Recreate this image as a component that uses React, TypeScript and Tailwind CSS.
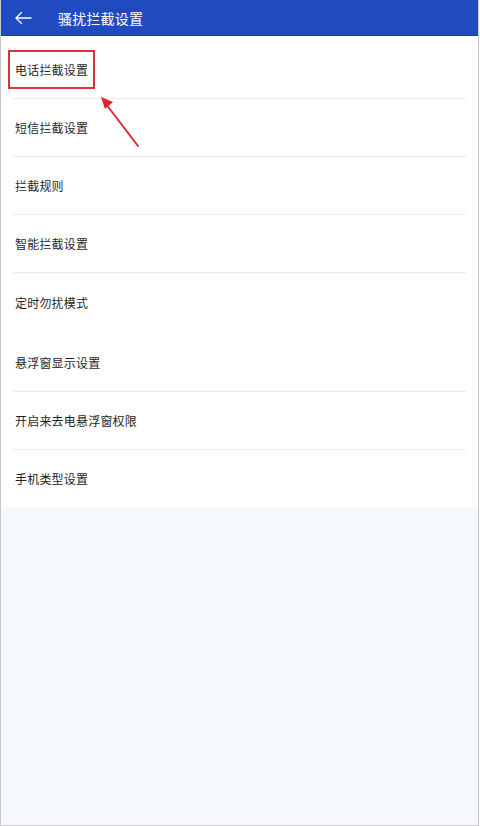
import React from "react";

const rows: { label: string; h: string; divider: boolean; pt: string }[] = [
  { label: "电话拦截设置", h: "h-[62px]", divider: true, pt: "pt-[6px]" },
  { label: "短信拦截设置", h: "h-[57px]", divider: true, pt: "pt-0" },
  { label: "拦截规则", h: "h-[57px]", divider: true, pt: "pt-0" },
  { label: "智能拦截设置", h: "h-[57px]", divider: true, pt: "pt-0" },
  { label: "定时勿扰模式", h: "h-[59px]", divider: false, pt: "pt-0" },
  { label: "悬浮窗显示设置", h: "h-[59px]", divider: true, pt: "pt-[2px]" },
  { label: "开启来去电悬浮窗权限", h: "h-[57px]", divider: true, pt: "pt-0" },
  { label: "手机类型设置", h: "h-[57px]", divider: false, pt: "pt-0" },
];

export default function App() {
  return (
    <div
      className="relative w-[480px] h-[826px] overflow-hidden bg-white"
      style={{ fontFamily: '"Noto Sans CJK SC", "Noto Sans", sans-serif' }}
    >
      <div className="flex flex-col h-full w-[479px] border-l border-r border-[#c8c8c8]">
        <div className="flex items-center h-[36px] bg-[#1f4ac0] border-b border-[#1a3a94] shrink-0">
          <svg width="18" height="14" viewBox="0 0 18 14" className="ml-[13px]" fill="none">
            <path d="M17 7H2M7.5 1.5L2 7l5.5 5.5" stroke="#ffffff" strokeWidth="1.4" strokeLinecap="round" strokeLinejoin="round" />
          </svg>
          <span className="ml-[26px] text-[14px] tracking-[0.2px] text-white leading-none">骚扰拦截设置</span>
        </div>
        <div className="flex flex-col bg-white">
          {rows.map((r) => (
            <div key={r.label} className="flex flex-col">
              <div className={`flex items-center ${r.h} ${r.pt} pl-[14px] text-[12px] tracking-[0.2px] text-[#1f1f1f]`}>
                {r.label}
              </div>
              {r.divider && <div className="h-px mx-[12px] bg-[#ececec]" />}
            </div>
          ))}
        </div>
        <div className="flex-1 bg-[#f5f9fd] border-b border-[#d0d0d0]" />
      </div>

      <div className="absolute left-[8px] top-[50px] w-[87px] h-[39px] border-2 border-[#d8343b]" />
      <svg className="absolute left-[96px] top-[92px]" width="50" height="58" viewBox="0 0 50 58">
        <line x1="42" y1="54" x2="10" y2="12" stroke="#d32f35" strokeWidth="2" strokeLinecap="round" />
        <polygon points="5,5 17,10 9,17" fill="#e0232b" />
      </svg>
    </div>
  );
}
